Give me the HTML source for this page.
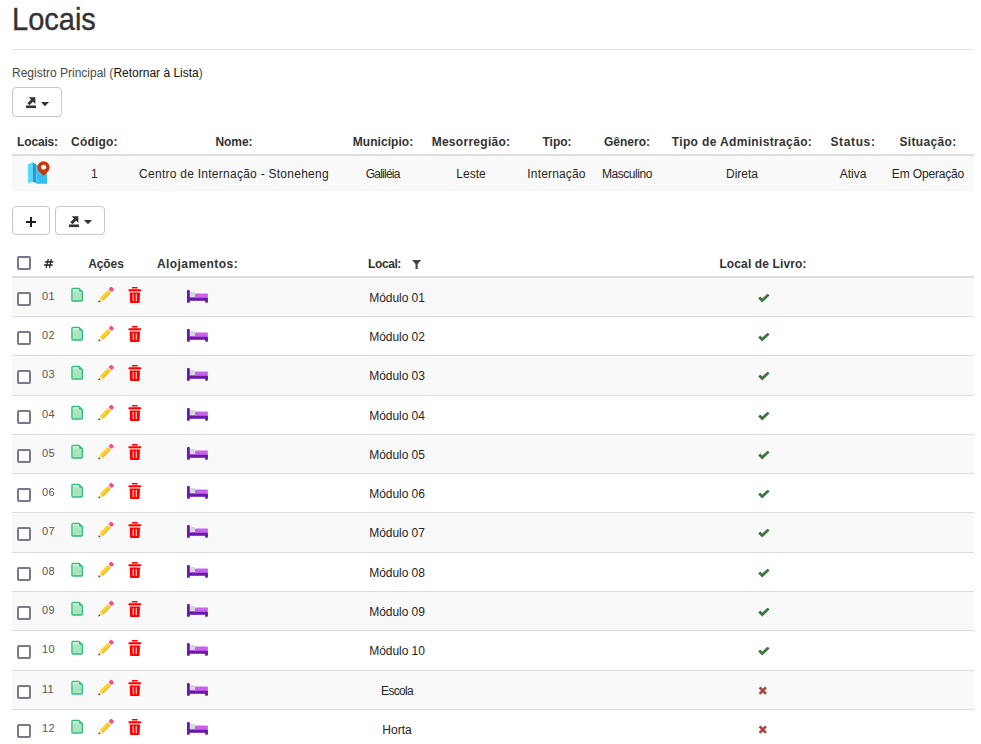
<!DOCTYPE html>
<html><head><meta charset="utf-8"><style>
html,body{margin:0;padding:0;background:#fff;width:981px;height:744px;overflow:hidden;position:relative}
</style></head><body>
<div style="position:absolute;left:0;top:0;transform-origin:0 30px;transform:scaleY(1.09);-webkit-text-stroke:0.35px #333"><div style="position:absolute;left:12px;top:3.75px;font:400 29px/33.35px 'Liberation Sans', sans-serif;color:#333;white-space:nowrap;letter-spacing:0px">Locais</div></div><div style="position:absolute;left:12px;top:49px;width:962px;height:1px;background:#e2e2e2"></div><div style="position:absolute;left:12px;top:66.54px;font:400 12px/13.80px 'Liberation Sans', sans-serif;color:#484848;white-space:nowrap;letter-spacing:0px">Registro Principal (<span style="color:#111">Retornar à Lista</span>)</div><div style="position:absolute;left:12px;top:87px;width:48px;height:28px;border:1px solid #c8c8c8;border-radius:4px;background:#fff"></div><svg style="position:absolute;left:26px;top:97px" width="11" height="12" viewBox="0 0 11 12">
<path d="M2.6 0.2 H9.4 V7 Z" fill="#333"/>
<path d="M6.6 3 L2.4 7.2" stroke="#333" stroke-width="3"/>
<rect x="0" y="8.5" width="10" height="2.6" fill="#333"/></svg><svg style="position:absolute;left:41px;top:102px" width="8" height="5" viewBox="0 0 8 5"><path d="M0 0 H8 L4 4.2 Z" fill="#333"/></svg><div style="position:absolute;left:12px;top:154px;width:962px;height:2px;background:#ddd"></div><div style="position:absolute;left:12px;top:156px;width:962px;height:35px;background:#f9f9f9"></div><div style="position:absolute;left:-162.5px;width:400px;text-align:center;top:135.94px;font:700 12px/13.80px 'Liberation Sans', sans-serif;color:#333;white-space:nowrap;letter-spacing:-0.17px">Locais:</div><div style="position:absolute;left:-105.6px;width:400px;text-align:center;top:135.94px;font:700 12px/13.80px 'Liberation Sans', sans-serif;color:#333;white-space:nowrap;letter-spacing:0.2px">Código:</div><div style="position:absolute;left:34px;width:400px;text-align:center;top:135.94px;font:700 12px/13.80px 'Liberation Sans', sans-serif;color:#333;white-space:nowrap;letter-spacing:-0.09px">Nome:</div><div style="position:absolute;left:183px;width:400px;text-align:center;top:135.94px;font:700 12px/13.80px 'Liberation Sans', sans-serif;color:#333;white-space:nowrap;letter-spacing:0.06px">Município:</div><div style="position:absolute;left:271px;width:400px;text-align:center;top:135.94px;font:700 12px/13.80px 'Liberation Sans', sans-serif;color:#333;white-space:nowrap;letter-spacing:0.28px">Mesorregião:</div><div style="position:absolute;left:357px;width:400px;text-align:center;top:135.94px;font:700 12px/13.80px 'Liberation Sans', sans-serif;color:#333;white-space:nowrap;letter-spacing:-0.03px">Tipo:</div><div style="position:absolute;left:427px;width:400px;text-align:center;top:135.94px;font:700 12px/13.80px 'Liberation Sans', sans-serif;color:#333;white-space:nowrap;letter-spacing:0.0px">Gênero:</div><div style="position:absolute;left:542px;width:400px;text-align:center;top:135.94px;font:700 12px/13.80px 'Liberation Sans', sans-serif;color:#333;white-space:nowrap;letter-spacing:0.35px">Tipo de Administração:</div><div style="position:absolute;left:653px;width:400px;text-align:center;top:135.94px;font:700 12px/13.80px 'Liberation Sans', sans-serif;color:#333;white-space:nowrap;letter-spacing:0.62px">Status:</div><div style="position:absolute;left:728px;width:400px;text-align:center;top:135.94px;font:700 12px/13.80px 'Liberation Sans', sans-serif;color:#333;white-space:nowrap;letter-spacing:0.34px">Situação:</div><div style="position:absolute;left:-105.6px;width:400px;text-align:center;top:168.14px;font:400 12px/13.80px 'Liberation Sans', sans-serif;color:#262626;white-space:nowrap;letter-spacing:0px">1</div><div style="position:absolute;left:34px;width:400px;text-align:center;top:168.14px;font:400 12px/13.80px 'Liberation Sans', sans-serif;color:#262626;white-space:nowrap;letter-spacing:0.26px">Centro de Internação - Stoneheng</div><div style="position:absolute;left:182.7px;width:400px;text-align:center;top:168.14px;font:400 12px/13.80px 'Liberation Sans', sans-serif;color:#262626;white-space:nowrap;letter-spacing:-0.76px">Galiléia</div><div style="position:absolute;left:271px;width:400px;text-align:center;top:168.14px;font:400 12px/13.80px 'Liberation Sans', sans-serif;color:#262626;white-space:nowrap;letter-spacing:0.01px">Leste</div><div style="position:absolute;left:356.5px;width:400px;text-align:center;top:168.14px;font:400 12px/13.80px 'Liberation Sans', sans-serif;color:#262626;white-space:nowrap;letter-spacing:0.16px">Internação</div><div style="position:absolute;left:427px;width:400px;text-align:center;top:168.14px;font:400 12px/13.80px 'Liberation Sans', sans-serif;color:#262626;white-space:nowrap;letter-spacing:-0.45px">Masculino</div><div style="position:absolute;left:542px;width:400px;text-align:center;top:168.14px;font:400 12px/13.80px 'Liberation Sans', sans-serif;color:#262626;white-space:nowrap;letter-spacing:0.0px">Direta</div><div style="position:absolute;left:653px;width:400px;text-align:center;top:168.14px;font:400 12px/13.80px 'Liberation Sans', sans-serif;color:#262626;white-space:nowrap;letter-spacing:-0.02px">Ativa</div><div style="position:absolute;left:728px;width:400px;text-align:center;top:168.14px;font:400 12px/13.80px 'Liberation Sans', sans-serif;color:#262626;white-space:nowrap;letter-spacing:-0.16px">Em Operação</div><svg style="position:absolute;left:28px;top:161px" width="23" height="24" viewBox="0 0 23 24">
<path d="M0 3.2 L4.7 1.6 V21 L0 22 Z" fill="#52dcfb"/>
<path d="M4.7 1.6 L8.3 3.4 V22 L4.7 21 Z" fill="#1a9de6"/>
<path d="M8.3 4 H19 V22.8 H8.3 Z" fill="#36c0f0"/>
<path d="M15.6 0.2 A6.1 6.1 0 0 1 21.7 6.3 C21.7 9.3 19.2 11.8 15.6 14.8 C12 11.8 9.5 9.3 9.5 6.3 A6.1 6.1 0 0 1 15.6 0.2 Z" fill="#c93a0a"/>
<circle cx="15.6" cy="6.3" r="2.45" fill="#fff"/></svg><div style="position:absolute;left:12px;top:206px;width:36px;height:27px;border:1px solid #c8c8c8;border-radius:4px;background:#fff"></div><div style="position:absolute;left:26.3px;top:221px;width:9.7px;height:2.2px;background:#1e1e1e"></div><div style="position:absolute;left:30px;top:217px;width:2.3px;height:9.8px;background:#1e1e1e"></div><div style="position:absolute;left:55px;top:206px;width:48px;height:27px;border:1px solid #c8c8c8;border-radius:4px;background:#fff"></div><svg style="position:absolute;left:69px;top:216px" width="11" height="12" viewBox="0 0 11 12">
<path d="M2.6 0.2 H9.4 V7 Z" fill="#333"/>
<path d="M6.6 3 L2.4 7.2" stroke="#333" stroke-width="3"/>
<rect x="0" y="8.5" width="10" height="2.6" fill="#333"/></svg><svg style="position:absolute;left:84px;top:220px" width="8" height="5" viewBox="0 0 8 5"><path d="M0 0 H8 L4 4.2 Z" fill="#333"/></svg><div style="position:absolute;left:17px;top:256px;width:10px;height:10px;border:2px solid #7b7889;border-radius:2px;background:#fff"></div><svg style="position:absolute;left:44px;top:258px" width="10" height="11" viewBox="0 0 10 11"><rect x="1.1" y="3.1" width="8.3" height="1.6" fill="#2a2a2a"/><rect x="0.1" y="6.2" width="8.5" height="1.6" fill="#2a2a2a"/><path d="M4.3 1 L2.1 10 M7.4 1 L5.4 10" stroke="#2a2a2a" stroke-width="1.2"/></svg><div style="position:absolute;left:-94px;width:400px;text-align:center;top:258.14px;font:700 12px/13.80px 'Liberation Sans', sans-serif;color:#333;white-space:nowrap;letter-spacing:-0.08px">Ações</div><div style="position:absolute;left:-2.5px;width:400px;text-align:center;top:258.14px;font:700 12px/13.80px 'Liberation Sans', sans-serif;color:#333;white-space:nowrap;letter-spacing:0.43px">Alojamentos:</div><div style="position:absolute;left:184.5px;width:400px;text-align:center;top:258.14px;font:700 12px/13.80px 'Liberation Sans', sans-serif;color:#333;white-space:nowrap;letter-spacing:-0.43px">Local:</div><svg style="position:absolute;left:412px;top:260px" width="10" height="9" viewBox="0 0 10 9"><path d="M0 0 H9.2 L5.7 4 V9 H3.5 V4 Z" fill="#444"/></svg><div style="position:absolute;left:563px;width:400px;text-align:center;top:258.14px;font:700 12px/13.80px 'Liberation Sans', sans-serif;color:#333;white-space:nowrap;letter-spacing:0.12px">Local de Livro:</div><div style="position:absolute;left:12px;top:276px;width:962px;height:2px;background:#ddd"></div><div style="position:absolute;left:12px;top:278px;width:962px;height:38px;background:#f9f9f9"></div><div style="position:absolute;left:12px;top:316px;width:962px;height:1px;background:#ddd"></div><div style="position:absolute;left:17px;top:292px;width:10px;height:10px;border:2px solid #7b7889;border-radius:2px;background:#fff"></div><div style="position:absolute;left:42px;top:290.05px;font:400 11px/12.65px 'Liberation Sans', sans-serif;color:#555;white-space:nowrap;letter-spacing:0.3px">01</div><svg style="position:absolute;left:71px;top:287px" width="13" height="16" viewBox="0 0 13 16">
<defs><linearGradient id="dg" x1="0" y1="0" x2="0" y2="1"><stop offset="0" stop-color="#d9f2e1"/><stop offset="0.35" stop-color="#a9e6c0"/><stop offset="1" stop-color="#a6e4bc"/></linearGradient></defs>
<path d="M1.9 1.4 H8 L11.4 4.8 V13 Q11.4 14 10.4 14 H1.9 Q0.9 14 0.9 13 V2.4 Q0.9 1.4 1.9 1.4 Z" fill="url(#dg)" stroke="#2fbf7f" stroke-width="1.3"/>
<path d="M8 1.4 V3.4 Q8 4.8 9.4 4.8 H11.4 Z" fill="#2fbf7f"/></svg><svg style="position:absolute;left:96px;top:285px" width="20" height="20" viewBox="0 0 20 20">
<g transform="translate(2.2 17.4) rotate(-45)">
<path d="M0 0 L4.6 -2.1 V2.1 Z" fill="#ffe2a0"/>
<path d="M0 0 L2.1 -1 V1 Z" fill="#2b2f3a"/>
<rect x="4.5" y="-2.15" width="11.2" height="4.3" fill="#ffd12c"/>
<rect x="4.5" y="0.95" width="11.2" height="1.2" fill="#f4ae22"/>
<rect x="15.7" y="-2.15" width="0.9" height="4.3" fill="#f2efe6"/>
<rect x="16.6" y="-2.2" width="3.9" height="4.4" rx="1.3" fill="#ff4885"/>
</g></svg><svg style="position:absolute;left:128px;top:287px" width="14" height="17" viewBox="0 0 14 17">
<rect x="3.8" y="0" width="6" height="1.6" rx="0.7" fill="#ff0000"/>
<rect x="4.6" y="1.4" width="4.6" height="1.2" fill="#ff8a8a"/>
<rect x="0.3" y="2.3" width="13" height="2" rx="1" fill="#ff0000"/>
<rect x="1.6" y="4.2" width="10.4" height="1.6" fill="#ff9090"/>
<path d="M1.7 5.8 H12 L11.6 15 Q11.5 16 10.5 16 H3.1 Q2.1 16 2 15 Z" fill="#ff0000"/>
<rect x="4.7" y="7.1" width="1.1" height="6.8" rx="0.5" fill="#ffe5e5"/>
<rect x="7.7" y="7.1" width="1.1" height="6.8" rx="0.5" fill="#ffe5e5"/></svg><svg style="position:absolute;left:187px;top:290px" width="22" height="14" viewBox="0 0 22 14">
<rect x="8" y="3.4" width="12.9" height="4.6" rx="0.8" fill="#c862ea"/>
<rect x="2.6" y="2" width="5.4" height="5" fill="#d6d8dc"/>
<rect x="2.6" y="7" width="5.4" height="1" fill="#c55fe8"/>
<rect x="0" y="0" width="2.8" height="12.8" rx="0.9" fill="#6a19a9"/>
<rect x="2" y="7.8" width="18.9" height="3" fill="#6a19a9"/>
<rect x="18.1" y="8" width="2.8" height="4.8" rx="0.7" fill="#6a19a9"/></svg><div style="position:absolute;left:197px;width:400px;text-align:center;top:292.14px;font:400 12px/13.80px 'Liberation Sans', sans-serif;color:#262626;white-space:nowrap;letter-spacing:-0.06px">Módulo 01</div><svg style="position:absolute;left:758px;top:294px" width="12" height="9" viewBox="0 0 12 9"><path d="M1.2 3.6 L4.2 6.6 L10.6 0.6" stroke="#3c763d" stroke-width="2.8" fill="none"/></svg><div style="position:absolute;left:12px;top:355px;width:962px;height:1px;background:#ddd"></div><div style="position:absolute;left:17px;top:331px;width:10px;height:10px;border:2px solid #7b7889;border-radius:2px;background:#fff"></div><div style="position:absolute;left:42px;top:329.05px;font:400 11px/12.65px 'Liberation Sans', sans-serif;color:#555;white-space:nowrap;letter-spacing:0.3px">02</div><svg style="position:absolute;left:71px;top:326px" width="13" height="16" viewBox="0 0 13 16">
<defs><linearGradient id="dg" x1="0" y1="0" x2="0" y2="1"><stop offset="0" stop-color="#d9f2e1"/><stop offset="0.35" stop-color="#a9e6c0"/><stop offset="1" stop-color="#a6e4bc"/></linearGradient></defs>
<path d="M1.9 1.4 H8 L11.4 4.8 V13 Q11.4 14 10.4 14 H1.9 Q0.9 14 0.9 13 V2.4 Q0.9 1.4 1.9 1.4 Z" fill="url(#dg)" stroke="#2fbf7f" stroke-width="1.3"/>
<path d="M8 1.4 V3.4 Q8 4.8 9.4 4.8 H11.4 Z" fill="#2fbf7f"/></svg><svg style="position:absolute;left:96px;top:324px" width="20" height="20" viewBox="0 0 20 20">
<g transform="translate(2.2 17.4) rotate(-45)">
<path d="M0 0 L4.6 -2.1 V2.1 Z" fill="#ffe2a0"/>
<path d="M0 0 L2.1 -1 V1 Z" fill="#2b2f3a"/>
<rect x="4.5" y="-2.15" width="11.2" height="4.3" fill="#ffd12c"/>
<rect x="4.5" y="0.95" width="11.2" height="1.2" fill="#f4ae22"/>
<rect x="15.7" y="-2.15" width="0.9" height="4.3" fill="#f2efe6"/>
<rect x="16.6" y="-2.2" width="3.9" height="4.4" rx="1.3" fill="#ff4885"/>
</g></svg><svg style="position:absolute;left:128px;top:326px" width="14" height="17" viewBox="0 0 14 17">
<rect x="3.8" y="0" width="6" height="1.6" rx="0.7" fill="#ff0000"/>
<rect x="4.6" y="1.4" width="4.6" height="1.2" fill="#ff8a8a"/>
<rect x="0.3" y="2.3" width="13" height="2" rx="1" fill="#ff0000"/>
<rect x="1.6" y="4.2" width="10.4" height="1.6" fill="#ff9090"/>
<path d="M1.7 5.8 H12 L11.6 15 Q11.5 16 10.5 16 H3.1 Q2.1 16 2 15 Z" fill="#ff0000"/>
<rect x="4.7" y="7.1" width="1.1" height="6.8" rx="0.5" fill="#ffe5e5"/>
<rect x="7.7" y="7.1" width="1.1" height="6.8" rx="0.5" fill="#ffe5e5"/></svg><svg style="position:absolute;left:187px;top:329px" width="22" height="14" viewBox="0 0 22 14">
<rect x="8" y="3.4" width="12.9" height="4.6" rx="0.8" fill="#c862ea"/>
<rect x="2.6" y="2" width="5.4" height="5" fill="#d6d8dc"/>
<rect x="2.6" y="7" width="5.4" height="1" fill="#c55fe8"/>
<rect x="0" y="0" width="2.8" height="12.8" rx="0.9" fill="#6a19a9"/>
<rect x="2" y="7.8" width="18.9" height="3" fill="#6a19a9"/>
<rect x="18.1" y="8" width="2.8" height="4.8" rx="0.7" fill="#6a19a9"/></svg><div style="position:absolute;left:197px;width:400px;text-align:center;top:331.14px;font:400 12px/13.80px 'Liberation Sans', sans-serif;color:#262626;white-space:nowrap;letter-spacing:-0.06px">Módulo 02</div><svg style="position:absolute;left:758px;top:333px" width="12" height="9" viewBox="0 0 12 9"><path d="M1.2 3.6 L4.2 6.6 L10.6 0.6" stroke="#3c763d" stroke-width="2.8" fill="none"/></svg><div style="position:absolute;left:12px;top:356px;width:962px;height:39px;background:#f9f9f9"></div><div style="position:absolute;left:12px;top:395px;width:962px;height:1px;background:#ddd"></div><div style="position:absolute;left:17px;top:370px;width:10px;height:10px;border:2px solid #7b7889;border-radius:2px;background:#fff"></div><div style="position:absolute;left:42px;top:368.05px;font:400 11px/12.65px 'Liberation Sans', sans-serif;color:#555;white-space:nowrap;letter-spacing:0.3px">03</div><svg style="position:absolute;left:71px;top:365px" width="13" height="16" viewBox="0 0 13 16">
<defs><linearGradient id="dg" x1="0" y1="0" x2="0" y2="1"><stop offset="0" stop-color="#d9f2e1"/><stop offset="0.35" stop-color="#a9e6c0"/><stop offset="1" stop-color="#a6e4bc"/></linearGradient></defs>
<path d="M1.9 1.4 H8 L11.4 4.8 V13 Q11.4 14 10.4 14 H1.9 Q0.9 14 0.9 13 V2.4 Q0.9 1.4 1.9 1.4 Z" fill="url(#dg)" stroke="#2fbf7f" stroke-width="1.3"/>
<path d="M8 1.4 V3.4 Q8 4.8 9.4 4.8 H11.4 Z" fill="#2fbf7f"/></svg><svg style="position:absolute;left:96px;top:363px" width="20" height="20" viewBox="0 0 20 20">
<g transform="translate(2.2 17.4) rotate(-45)">
<path d="M0 0 L4.6 -2.1 V2.1 Z" fill="#ffe2a0"/>
<path d="M0 0 L2.1 -1 V1 Z" fill="#2b2f3a"/>
<rect x="4.5" y="-2.15" width="11.2" height="4.3" fill="#ffd12c"/>
<rect x="4.5" y="0.95" width="11.2" height="1.2" fill="#f4ae22"/>
<rect x="15.7" y="-2.15" width="0.9" height="4.3" fill="#f2efe6"/>
<rect x="16.6" y="-2.2" width="3.9" height="4.4" rx="1.3" fill="#ff4885"/>
</g></svg><svg style="position:absolute;left:128px;top:365px" width="14" height="17" viewBox="0 0 14 17">
<rect x="3.8" y="0" width="6" height="1.6" rx="0.7" fill="#ff0000"/>
<rect x="4.6" y="1.4" width="4.6" height="1.2" fill="#ff8a8a"/>
<rect x="0.3" y="2.3" width="13" height="2" rx="1" fill="#ff0000"/>
<rect x="1.6" y="4.2" width="10.4" height="1.6" fill="#ff9090"/>
<path d="M1.7 5.8 H12 L11.6 15 Q11.5 16 10.5 16 H3.1 Q2.1 16 2 15 Z" fill="#ff0000"/>
<rect x="4.7" y="7.1" width="1.1" height="6.8" rx="0.5" fill="#ffe5e5"/>
<rect x="7.7" y="7.1" width="1.1" height="6.8" rx="0.5" fill="#ffe5e5"/></svg><svg style="position:absolute;left:187px;top:368px" width="22" height="14" viewBox="0 0 22 14">
<rect x="8" y="3.4" width="12.9" height="4.6" rx="0.8" fill="#c862ea"/>
<rect x="2.6" y="2" width="5.4" height="5" fill="#d6d8dc"/>
<rect x="2.6" y="7" width="5.4" height="1" fill="#c55fe8"/>
<rect x="0" y="0" width="2.8" height="12.8" rx="0.9" fill="#6a19a9"/>
<rect x="2" y="7.8" width="18.9" height="3" fill="#6a19a9"/>
<rect x="18.1" y="8" width="2.8" height="4.8" rx="0.7" fill="#6a19a9"/></svg><div style="position:absolute;left:197px;width:400px;text-align:center;top:370.14px;font:400 12px/13.80px 'Liberation Sans', sans-serif;color:#262626;white-space:nowrap;letter-spacing:-0.06px">Módulo 03</div><svg style="position:absolute;left:758px;top:372px" width="12" height="9" viewBox="0 0 12 9"><path d="M1.2 3.6 L4.2 6.6 L10.6 0.6" stroke="#3c763d" stroke-width="2.8" fill="none"/></svg><div style="position:absolute;left:12px;top:434px;width:962px;height:1px;background:#ddd"></div><div style="position:absolute;left:17px;top:410px;width:10px;height:10px;border:2px solid #7b7889;border-radius:2px;background:#fff"></div><div style="position:absolute;left:42px;top:408.05px;font:400 11px/12.65px 'Liberation Sans', sans-serif;color:#555;white-space:nowrap;letter-spacing:0.3px">04</div><svg style="position:absolute;left:71px;top:405px" width="13" height="16" viewBox="0 0 13 16">
<defs><linearGradient id="dg" x1="0" y1="0" x2="0" y2="1"><stop offset="0" stop-color="#d9f2e1"/><stop offset="0.35" stop-color="#a9e6c0"/><stop offset="1" stop-color="#a6e4bc"/></linearGradient></defs>
<path d="M1.9 1.4 H8 L11.4 4.8 V13 Q11.4 14 10.4 14 H1.9 Q0.9 14 0.9 13 V2.4 Q0.9 1.4 1.9 1.4 Z" fill="url(#dg)" stroke="#2fbf7f" stroke-width="1.3"/>
<path d="M8 1.4 V3.4 Q8 4.8 9.4 4.8 H11.4 Z" fill="#2fbf7f"/></svg><svg style="position:absolute;left:96px;top:403px" width="20" height="20" viewBox="0 0 20 20">
<g transform="translate(2.2 17.4) rotate(-45)">
<path d="M0 0 L4.6 -2.1 V2.1 Z" fill="#ffe2a0"/>
<path d="M0 0 L2.1 -1 V1 Z" fill="#2b2f3a"/>
<rect x="4.5" y="-2.15" width="11.2" height="4.3" fill="#ffd12c"/>
<rect x="4.5" y="0.95" width="11.2" height="1.2" fill="#f4ae22"/>
<rect x="15.7" y="-2.15" width="0.9" height="4.3" fill="#f2efe6"/>
<rect x="16.6" y="-2.2" width="3.9" height="4.4" rx="1.3" fill="#ff4885"/>
</g></svg><svg style="position:absolute;left:128px;top:405px" width="14" height="17" viewBox="0 0 14 17">
<rect x="3.8" y="0" width="6" height="1.6" rx="0.7" fill="#ff0000"/>
<rect x="4.6" y="1.4" width="4.6" height="1.2" fill="#ff8a8a"/>
<rect x="0.3" y="2.3" width="13" height="2" rx="1" fill="#ff0000"/>
<rect x="1.6" y="4.2" width="10.4" height="1.6" fill="#ff9090"/>
<path d="M1.7 5.8 H12 L11.6 15 Q11.5 16 10.5 16 H3.1 Q2.1 16 2 15 Z" fill="#ff0000"/>
<rect x="4.7" y="7.1" width="1.1" height="6.8" rx="0.5" fill="#ffe5e5"/>
<rect x="7.7" y="7.1" width="1.1" height="6.8" rx="0.5" fill="#ffe5e5"/></svg><svg style="position:absolute;left:187px;top:408px" width="22" height="14" viewBox="0 0 22 14">
<rect x="8" y="3.4" width="12.9" height="4.6" rx="0.8" fill="#c862ea"/>
<rect x="2.6" y="2" width="5.4" height="5" fill="#d6d8dc"/>
<rect x="2.6" y="7" width="5.4" height="1" fill="#c55fe8"/>
<rect x="0" y="0" width="2.8" height="12.8" rx="0.9" fill="#6a19a9"/>
<rect x="2" y="7.8" width="18.9" height="3" fill="#6a19a9"/>
<rect x="18.1" y="8" width="2.8" height="4.8" rx="0.7" fill="#6a19a9"/></svg><div style="position:absolute;left:197px;width:400px;text-align:center;top:410.14px;font:400 12px/13.80px 'Liberation Sans', sans-serif;color:#262626;white-space:nowrap;letter-spacing:-0.06px">Módulo 04</div><svg style="position:absolute;left:758px;top:412px" width="12" height="9" viewBox="0 0 12 9"><path d="M1.2 3.6 L4.2 6.6 L10.6 0.6" stroke="#3c763d" stroke-width="2.8" fill="none"/></svg><div style="position:absolute;left:12px;top:435px;width:962px;height:38px;background:#f9f9f9"></div><div style="position:absolute;left:12px;top:473px;width:962px;height:1px;background:#ddd"></div><div style="position:absolute;left:17px;top:449px;width:10px;height:10px;border:2px solid #7b7889;border-radius:2px;background:#fff"></div><div style="position:absolute;left:42px;top:447.05px;font:400 11px/12.65px 'Liberation Sans', sans-serif;color:#555;white-space:nowrap;letter-spacing:0.3px">05</div><svg style="position:absolute;left:71px;top:444px" width="13" height="16" viewBox="0 0 13 16">
<defs><linearGradient id="dg" x1="0" y1="0" x2="0" y2="1"><stop offset="0" stop-color="#d9f2e1"/><stop offset="0.35" stop-color="#a9e6c0"/><stop offset="1" stop-color="#a6e4bc"/></linearGradient></defs>
<path d="M1.9 1.4 H8 L11.4 4.8 V13 Q11.4 14 10.4 14 H1.9 Q0.9 14 0.9 13 V2.4 Q0.9 1.4 1.9 1.4 Z" fill="url(#dg)" stroke="#2fbf7f" stroke-width="1.3"/>
<path d="M8 1.4 V3.4 Q8 4.8 9.4 4.8 H11.4 Z" fill="#2fbf7f"/></svg><svg style="position:absolute;left:96px;top:442px" width="20" height="20" viewBox="0 0 20 20">
<g transform="translate(2.2 17.4) rotate(-45)">
<path d="M0 0 L4.6 -2.1 V2.1 Z" fill="#ffe2a0"/>
<path d="M0 0 L2.1 -1 V1 Z" fill="#2b2f3a"/>
<rect x="4.5" y="-2.15" width="11.2" height="4.3" fill="#ffd12c"/>
<rect x="4.5" y="0.95" width="11.2" height="1.2" fill="#f4ae22"/>
<rect x="15.7" y="-2.15" width="0.9" height="4.3" fill="#f2efe6"/>
<rect x="16.6" y="-2.2" width="3.9" height="4.4" rx="1.3" fill="#ff4885"/>
</g></svg><svg style="position:absolute;left:128px;top:444px" width="14" height="17" viewBox="0 0 14 17">
<rect x="3.8" y="0" width="6" height="1.6" rx="0.7" fill="#ff0000"/>
<rect x="4.6" y="1.4" width="4.6" height="1.2" fill="#ff8a8a"/>
<rect x="0.3" y="2.3" width="13" height="2" rx="1" fill="#ff0000"/>
<rect x="1.6" y="4.2" width="10.4" height="1.6" fill="#ff9090"/>
<path d="M1.7 5.8 H12 L11.6 15 Q11.5 16 10.5 16 H3.1 Q2.1 16 2 15 Z" fill="#ff0000"/>
<rect x="4.7" y="7.1" width="1.1" height="6.8" rx="0.5" fill="#ffe5e5"/>
<rect x="7.7" y="7.1" width="1.1" height="6.8" rx="0.5" fill="#ffe5e5"/></svg><svg style="position:absolute;left:187px;top:447px" width="22" height="14" viewBox="0 0 22 14">
<rect x="8" y="3.4" width="12.9" height="4.6" rx="0.8" fill="#c862ea"/>
<rect x="2.6" y="2" width="5.4" height="5" fill="#d6d8dc"/>
<rect x="2.6" y="7" width="5.4" height="1" fill="#c55fe8"/>
<rect x="0" y="0" width="2.8" height="12.8" rx="0.9" fill="#6a19a9"/>
<rect x="2" y="7.8" width="18.9" height="3" fill="#6a19a9"/>
<rect x="18.1" y="8" width="2.8" height="4.8" rx="0.7" fill="#6a19a9"/></svg><div style="position:absolute;left:197px;width:400px;text-align:center;top:449.14px;font:400 12px/13.80px 'Liberation Sans', sans-serif;color:#262626;white-space:nowrap;letter-spacing:-0.06px">Módulo 05</div><svg style="position:absolute;left:758px;top:451px" width="12" height="9" viewBox="0 0 12 9"><path d="M1.2 3.6 L4.2 6.6 L10.6 0.6" stroke="#3c763d" stroke-width="2.8" fill="none"/></svg><div style="position:absolute;left:12px;top:512px;width:962px;height:1px;background:#ddd"></div><div style="position:absolute;left:17px;top:488px;width:10px;height:10px;border:2px solid #7b7889;border-radius:2px;background:#fff"></div><div style="position:absolute;left:42px;top:486.05px;font:400 11px/12.65px 'Liberation Sans', sans-serif;color:#555;white-space:nowrap;letter-spacing:0.3px">06</div><svg style="position:absolute;left:71px;top:483px" width="13" height="16" viewBox="0 0 13 16">
<defs><linearGradient id="dg" x1="0" y1="0" x2="0" y2="1"><stop offset="0" stop-color="#d9f2e1"/><stop offset="0.35" stop-color="#a9e6c0"/><stop offset="1" stop-color="#a6e4bc"/></linearGradient></defs>
<path d="M1.9 1.4 H8 L11.4 4.8 V13 Q11.4 14 10.4 14 H1.9 Q0.9 14 0.9 13 V2.4 Q0.9 1.4 1.9 1.4 Z" fill="url(#dg)" stroke="#2fbf7f" stroke-width="1.3"/>
<path d="M8 1.4 V3.4 Q8 4.8 9.4 4.8 H11.4 Z" fill="#2fbf7f"/></svg><svg style="position:absolute;left:96px;top:481px" width="20" height="20" viewBox="0 0 20 20">
<g transform="translate(2.2 17.4) rotate(-45)">
<path d="M0 0 L4.6 -2.1 V2.1 Z" fill="#ffe2a0"/>
<path d="M0 0 L2.1 -1 V1 Z" fill="#2b2f3a"/>
<rect x="4.5" y="-2.15" width="11.2" height="4.3" fill="#ffd12c"/>
<rect x="4.5" y="0.95" width="11.2" height="1.2" fill="#f4ae22"/>
<rect x="15.7" y="-2.15" width="0.9" height="4.3" fill="#f2efe6"/>
<rect x="16.6" y="-2.2" width="3.9" height="4.4" rx="1.3" fill="#ff4885"/>
</g></svg><svg style="position:absolute;left:128px;top:483px" width="14" height="17" viewBox="0 0 14 17">
<rect x="3.8" y="0" width="6" height="1.6" rx="0.7" fill="#ff0000"/>
<rect x="4.6" y="1.4" width="4.6" height="1.2" fill="#ff8a8a"/>
<rect x="0.3" y="2.3" width="13" height="2" rx="1" fill="#ff0000"/>
<rect x="1.6" y="4.2" width="10.4" height="1.6" fill="#ff9090"/>
<path d="M1.7 5.8 H12 L11.6 15 Q11.5 16 10.5 16 H3.1 Q2.1 16 2 15 Z" fill="#ff0000"/>
<rect x="4.7" y="7.1" width="1.1" height="6.8" rx="0.5" fill="#ffe5e5"/>
<rect x="7.7" y="7.1" width="1.1" height="6.8" rx="0.5" fill="#ffe5e5"/></svg><svg style="position:absolute;left:187px;top:486px" width="22" height="14" viewBox="0 0 22 14">
<rect x="8" y="3.4" width="12.9" height="4.6" rx="0.8" fill="#c862ea"/>
<rect x="2.6" y="2" width="5.4" height="5" fill="#d6d8dc"/>
<rect x="2.6" y="7" width="5.4" height="1" fill="#c55fe8"/>
<rect x="0" y="0" width="2.8" height="12.8" rx="0.9" fill="#6a19a9"/>
<rect x="2" y="7.8" width="18.9" height="3" fill="#6a19a9"/>
<rect x="18.1" y="8" width="2.8" height="4.8" rx="0.7" fill="#6a19a9"/></svg><div style="position:absolute;left:197px;width:400px;text-align:center;top:488.14px;font:400 12px/13.80px 'Liberation Sans', sans-serif;color:#262626;white-space:nowrap;letter-spacing:-0.06px">Módulo 06</div><svg style="position:absolute;left:758px;top:490px" width="12" height="9" viewBox="0 0 12 9"><path d="M1.2 3.6 L4.2 6.6 L10.6 0.6" stroke="#3c763d" stroke-width="2.8" fill="none"/></svg><div style="position:absolute;left:12px;top:513px;width:962px;height:39px;background:#f9f9f9"></div><div style="position:absolute;left:12px;top:552px;width:962px;height:1px;background:#ddd"></div><div style="position:absolute;left:17px;top:527px;width:10px;height:10px;border:2px solid #7b7889;border-radius:2px;background:#fff"></div><div style="position:absolute;left:42px;top:525.04px;font:400 11px/12.65px 'Liberation Sans', sans-serif;color:#555;white-space:nowrap;letter-spacing:0.3px">07</div><svg style="position:absolute;left:71px;top:522px" width="13" height="16" viewBox="0 0 13 16">
<defs><linearGradient id="dg" x1="0" y1="0" x2="0" y2="1"><stop offset="0" stop-color="#d9f2e1"/><stop offset="0.35" stop-color="#a9e6c0"/><stop offset="1" stop-color="#a6e4bc"/></linearGradient></defs>
<path d="M1.9 1.4 H8 L11.4 4.8 V13 Q11.4 14 10.4 14 H1.9 Q0.9 14 0.9 13 V2.4 Q0.9 1.4 1.9 1.4 Z" fill="url(#dg)" stroke="#2fbf7f" stroke-width="1.3"/>
<path d="M8 1.4 V3.4 Q8 4.8 9.4 4.8 H11.4 Z" fill="#2fbf7f"/></svg><svg style="position:absolute;left:96px;top:520px" width="20" height="20" viewBox="0 0 20 20">
<g transform="translate(2.2 17.4) rotate(-45)">
<path d="M0 0 L4.6 -2.1 V2.1 Z" fill="#ffe2a0"/>
<path d="M0 0 L2.1 -1 V1 Z" fill="#2b2f3a"/>
<rect x="4.5" y="-2.15" width="11.2" height="4.3" fill="#ffd12c"/>
<rect x="4.5" y="0.95" width="11.2" height="1.2" fill="#f4ae22"/>
<rect x="15.7" y="-2.15" width="0.9" height="4.3" fill="#f2efe6"/>
<rect x="16.6" y="-2.2" width="3.9" height="4.4" rx="1.3" fill="#ff4885"/>
</g></svg><svg style="position:absolute;left:128px;top:522px" width="14" height="17" viewBox="0 0 14 17">
<rect x="3.8" y="0" width="6" height="1.6" rx="0.7" fill="#ff0000"/>
<rect x="4.6" y="1.4" width="4.6" height="1.2" fill="#ff8a8a"/>
<rect x="0.3" y="2.3" width="13" height="2" rx="1" fill="#ff0000"/>
<rect x="1.6" y="4.2" width="10.4" height="1.6" fill="#ff9090"/>
<path d="M1.7 5.8 H12 L11.6 15 Q11.5 16 10.5 16 H3.1 Q2.1 16 2 15 Z" fill="#ff0000"/>
<rect x="4.7" y="7.1" width="1.1" height="6.8" rx="0.5" fill="#ffe5e5"/>
<rect x="7.7" y="7.1" width="1.1" height="6.8" rx="0.5" fill="#ffe5e5"/></svg><svg style="position:absolute;left:187px;top:525px" width="22" height="14" viewBox="0 0 22 14">
<rect x="8" y="3.4" width="12.9" height="4.6" rx="0.8" fill="#c862ea"/>
<rect x="2.6" y="2" width="5.4" height="5" fill="#d6d8dc"/>
<rect x="2.6" y="7" width="5.4" height="1" fill="#c55fe8"/>
<rect x="0" y="0" width="2.8" height="12.8" rx="0.9" fill="#6a19a9"/>
<rect x="2" y="7.8" width="18.9" height="3" fill="#6a19a9"/>
<rect x="18.1" y="8" width="2.8" height="4.8" rx="0.7" fill="#6a19a9"/></svg><div style="position:absolute;left:197px;width:400px;text-align:center;top:527.14px;font:400 12px/13.80px 'Liberation Sans', sans-serif;color:#262626;white-space:nowrap;letter-spacing:-0.06px">Módulo 07</div><svg style="position:absolute;left:758px;top:529px" width="12" height="9" viewBox="0 0 12 9"><path d="M1.2 3.6 L4.2 6.6 L10.6 0.6" stroke="#3c763d" stroke-width="2.8" fill="none"/></svg><div style="position:absolute;left:12px;top:591px;width:962px;height:1px;background:#ddd"></div><div style="position:absolute;left:17px;top:567px;width:10px;height:10px;border:2px solid #7b7889;border-radius:2px;background:#fff"></div><div style="position:absolute;left:42px;top:565.04px;font:400 11px/12.65px 'Liberation Sans', sans-serif;color:#555;white-space:nowrap;letter-spacing:0.3px">08</div><svg style="position:absolute;left:71px;top:562px" width="13" height="16" viewBox="0 0 13 16">
<defs><linearGradient id="dg" x1="0" y1="0" x2="0" y2="1"><stop offset="0" stop-color="#d9f2e1"/><stop offset="0.35" stop-color="#a9e6c0"/><stop offset="1" stop-color="#a6e4bc"/></linearGradient></defs>
<path d="M1.9 1.4 H8 L11.4 4.8 V13 Q11.4 14 10.4 14 H1.9 Q0.9 14 0.9 13 V2.4 Q0.9 1.4 1.9 1.4 Z" fill="url(#dg)" stroke="#2fbf7f" stroke-width="1.3"/>
<path d="M8 1.4 V3.4 Q8 4.8 9.4 4.8 H11.4 Z" fill="#2fbf7f"/></svg><svg style="position:absolute;left:96px;top:560px" width="20" height="20" viewBox="0 0 20 20">
<g transform="translate(2.2 17.4) rotate(-45)">
<path d="M0 0 L4.6 -2.1 V2.1 Z" fill="#ffe2a0"/>
<path d="M0 0 L2.1 -1 V1 Z" fill="#2b2f3a"/>
<rect x="4.5" y="-2.15" width="11.2" height="4.3" fill="#ffd12c"/>
<rect x="4.5" y="0.95" width="11.2" height="1.2" fill="#f4ae22"/>
<rect x="15.7" y="-2.15" width="0.9" height="4.3" fill="#f2efe6"/>
<rect x="16.6" y="-2.2" width="3.9" height="4.4" rx="1.3" fill="#ff4885"/>
</g></svg><svg style="position:absolute;left:128px;top:562px" width="14" height="17" viewBox="0 0 14 17">
<rect x="3.8" y="0" width="6" height="1.6" rx="0.7" fill="#ff0000"/>
<rect x="4.6" y="1.4" width="4.6" height="1.2" fill="#ff8a8a"/>
<rect x="0.3" y="2.3" width="13" height="2" rx="1" fill="#ff0000"/>
<rect x="1.6" y="4.2" width="10.4" height="1.6" fill="#ff9090"/>
<path d="M1.7 5.8 H12 L11.6 15 Q11.5 16 10.5 16 H3.1 Q2.1 16 2 15 Z" fill="#ff0000"/>
<rect x="4.7" y="7.1" width="1.1" height="6.8" rx="0.5" fill="#ffe5e5"/>
<rect x="7.7" y="7.1" width="1.1" height="6.8" rx="0.5" fill="#ffe5e5"/></svg><svg style="position:absolute;left:187px;top:565px" width="22" height="14" viewBox="0 0 22 14">
<rect x="8" y="3.4" width="12.9" height="4.6" rx="0.8" fill="#c862ea"/>
<rect x="2.6" y="2" width="5.4" height="5" fill="#d6d8dc"/>
<rect x="2.6" y="7" width="5.4" height="1" fill="#c55fe8"/>
<rect x="0" y="0" width="2.8" height="12.8" rx="0.9" fill="#6a19a9"/>
<rect x="2" y="7.8" width="18.9" height="3" fill="#6a19a9"/>
<rect x="18.1" y="8" width="2.8" height="4.8" rx="0.7" fill="#6a19a9"/></svg><div style="position:absolute;left:197px;width:400px;text-align:center;top:567.14px;font:400 12px/13.80px 'Liberation Sans', sans-serif;color:#262626;white-space:nowrap;letter-spacing:-0.06px">Módulo 08</div><svg style="position:absolute;left:758px;top:569px" width="12" height="9" viewBox="0 0 12 9"><path d="M1.2 3.6 L4.2 6.6 L10.6 0.6" stroke="#3c763d" stroke-width="2.8" fill="none"/></svg><div style="position:absolute;left:12px;top:592px;width:962px;height:38px;background:#f9f9f9"></div><div style="position:absolute;left:12px;top:630px;width:962px;height:1px;background:#ddd"></div><div style="position:absolute;left:17px;top:606px;width:10px;height:10px;border:2px solid #7b7889;border-radius:2px;background:#fff"></div><div style="position:absolute;left:42px;top:604.04px;font:400 11px/12.65px 'Liberation Sans', sans-serif;color:#555;white-space:nowrap;letter-spacing:0.3px">09</div><svg style="position:absolute;left:71px;top:601px" width="13" height="16" viewBox="0 0 13 16">
<defs><linearGradient id="dg" x1="0" y1="0" x2="0" y2="1"><stop offset="0" stop-color="#d9f2e1"/><stop offset="0.35" stop-color="#a9e6c0"/><stop offset="1" stop-color="#a6e4bc"/></linearGradient></defs>
<path d="M1.9 1.4 H8 L11.4 4.8 V13 Q11.4 14 10.4 14 H1.9 Q0.9 14 0.9 13 V2.4 Q0.9 1.4 1.9 1.4 Z" fill="url(#dg)" stroke="#2fbf7f" stroke-width="1.3"/>
<path d="M8 1.4 V3.4 Q8 4.8 9.4 4.8 H11.4 Z" fill="#2fbf7f"/></svg><svg style="position:absolute;left:96px;top:599px" width="20" height="20" viewBox="0 0 20 20">
<g transform="translate(2.2 17.4) rotate(-45)">
<path d="M0 0 L4.6 -2.1 V2.1 Z" fill="#ffe2a0"/>
<path d="M0 0 L2.1 -1 V1 Z" fill="#2b2f3a"/>
<rect x="4.5" y="-2.15" width="11.2" height="4.3" fill="#ffd12c"/>
<rect x="4.5" y="0.95" width="11.2" height="1.2" fill="#f4ae22"/>
<rect x="15.7" y="-2.15" width="0.9" height="4.3" fill="#f2efe6"/>
<rect x="16.6" y="-2.2" width="3.9" height="4.4" rx="1.3" fill="#ff4885"/>
</g></svg><svg style="position:absolute;left:128px;top:601px" width="14" height="17" viewBox="0 0 14 17">
<rect x="3.8" y="0" width="6" height="1.6" rx="0.7" fill="#ff0000"/>
<rect x="4.6" y="1.4" width="4.6" height="1.2" fill="#ff8a8a"/>
<rect x="0.3" y="2.3" width="13" height="2" rx="1" fill="#ff0000"/>
<rect x="1.6" y="4.2" width="10.4" height="1.6" fill="#ff9090"/>
<path d="M1.7 5.8 H12 L11.6 15 Q11.5 16 10.5 16 H3.1 Q2.1 16 2 15 Z" fill="#ff0000"/>
<rect x="4.7" y="7.1" width="1.1" height="6.8" rx="0.5" fill="#ffe5e5"/>
<rect x="7.7" y="7.1" width="1.1" height="6.8" rx="0.5" fill="#ffe5e5"/></svg><svg style="position:absolute;left:187px;top:604px" width="22" height="14" viewBox="0 0 22 14">
<rect x="8" y="3.4" width="12.9" height="4.6" rx="0.8" fill="#c862ea"/>
<rect x="2.6" y="2" width="5.4" height="5" fill="#d6d8dc"/>
<rect x="2.6" y="7" width="5.4" height="1" fill="#c55fe8"/>
<rect x="0" y="0" width="2.8" height="12.8" rx="0.9" fill="#6a19a9"/>
<rect x="2" y="7.8" width="18.9" height="3" fill="#6a19a9"/>
<rect x="18.1" y="8" width="2.8" height="4.8" rx="0.7" fill="#6a19a9"/></svg><div style="position:absolute;left:197px;width:400px;text-align:center;top:606.14px;font:400 12px/13.80px 'Liberation Sans', sans-serif;color:#262626;white-space:nowrap;letter-spacing:-0.06px">Módulo 09</div><svg style="position:absolute;left:758px;top:608px" width="12" height="9" viewBox="0 0 12 9"><path d="M1.2 3.6 L4.2 6.6 L10.6 0.6" stroke="#3c763d" stroke-width="2.8" fill="none"/></svg><div style="position:absolute;left:12px;top:670px;width:962px;height:1px;background:#ddd"></div><div style="position:absolute;left:17px;top:645px;width:10px;height:10px;border:2px solid #7b7889;border-radius:2px;background:#fff"></div><div style="position:absolute;left:42px;top:643.04px;font:400 11px/12.65px 'Liberation Sans', sans-serif;color:#555;white-space:nowrap;letter-spacing:0.3px">10</div><svg style="position:absolute;left:71px;top:640px" width="13" height="16" viewBox="0 0 13 16">
<defs><linearGradient id="dg" x1="0" y1="0" x2="0" y2="1"><stop offset="0" stop-color="#d9f2e1"/><stop offset="0.35" stop-color="#a9e6c0"/><stop offset="1" stop-color="#a6e4bc"/></linearGradient></defs>
<path d="M1.9 1.4 H8 L11.4 4.8 V13 Q11.4 14 10.4 14 H1.9 Q0.9 14 0.9 13 V2.4 Q0.9 1.4 1.9 1.4 Z" fill="url(#dg)" stroke="#2fbf7f" stroke-width="1.3"/>
<path d="M8 1.4 V3.4 Q8 4.8 9.4 4.8 H11.4 Z" fill="#2fbf7f"/></svg><svg style="position:absolute;left:96px;top:638px" width="20" height="20" viewBox="0 0 20 20">
<g transform="translate(2.2 17.4) rotate(-45)">
<path d="M0 0 L4.6 -2.1 V2.1 Z" fill="#ffe2a0"/>
<path d="M0 0 L2.1 -1 V1 Z" fill="#2b2f3a"/>
<rect x="4.5" y="-2.15" width="11.2" height="4.3" fill="#ffd12c"/>
<rect x="4.5" y="0.95" width="11.2" height="1.2" fill="#f4ae22"/>
<rect x="15.7" y="-2.15" width="0.9" height="4.3" fill="#f2efe6"/>
<rect x="16.6" y="-2.2" width="3.9" height="4.4" rx="1.3" fill="#ff4885"/>
</g></svg><svg style="position:absolute;left:128px;top:640px" width="14" height="17" viewBox="0 0 14 17">
<rect x="3.8" y="0" width="6" height="1.6" rx="0.7" fill="#ff0000"/>
<rect x="4.6" y="1.4" width="4.6" height="1.2" fill="#ff8a8a"/>
<rect x="0.3" y="2.3" width="13" height="2" rx="1" fill="#ff0000"/>
<rect x="1.6" y="4.2" width="10.4" height="1.6" fill="#ff9090"/>
<path d="M1.7 5.8 H12 L11.6 15 Q11.5 16 10.5 16 H3.1 Q2.1 16 2 15 Z" fill="#ff0000"/>
<rect x="4.7" y="7.1" width="1.1" height="6.8" rx="0.5" fill="#ffe5e5"/>
<rect x="7.7" y="7.1" width="1.1" height="6.8" rx="0.5" fill="#ffe5e5"/></svg><svg style="position:absolute;left:187px;top:643px" width="22" height="14" viewBox="0 0 22 14">
<rect x="8" y="3.4" width="12.9" height="4.6" rx="0.8" fill="#c862ea"/>
<rect x="2.6" y="2" width="5.4" height="5" fill="#d6d8dc"/>
<rect x="2.6" y="7" width="5.4" height="1" fill="#c55fe8"/>
<rect x="0" y="0" width="2.8" height="12.8" rx="0.9" fill="#6a19a9"/>
<rect x="2" y="7.8" width="18.9" height="3" fill="#6a19a9"/>
<rect x="18.1" y="8" width="2.8" height="4.8" rx="0.7" fill="#6a19a9"/></svg><div style="position:absolute;left:197px;width:400px;text-align:center;top:645.14px;font:400 12px/13.80px 'Liberation Sans', sans-serif;color:#262626;white-space:nowrap;letter-spacing:-0.06px">Módulo 10</div><svg style="position:absolute;left:758px;top:647px" width="12" height="9" viewBox="0 0 12 9"><path d="M1.2 3.6 L4.2 6.6 L10.6 0.6" stroke="#3c763d" stroke-width="2.8" fill="none"/></svg><div style="position:absolute;left:12px;top:671px;width:962px;height:38px;background:#f9f9f9"></div><div style="position:absolute;left:12px;top:709px;width:962px;height:1px;background:#ddd"></div><div style="position:absolute;left:17px;top:685px;width:10px;height:10px;border:2px solid #7b7889;border-radius:2px;background:#fff"></div><div style="position:absolute;left:42px;top:683.04px;font:400 11px/12.65px 'Liberation Sans', sans-serif;color:#555;white-space:nowrap;letter-spacing:0.3px">11</div><svg style="position:absolute;left:71px;top:680px" width="13" height="16" viewBox="0 0 13 16">
<defs><linearGradient id="dg" x1="0" y1="0" x2="0" y2="1"><stop offset="0" stop-color="#d9f2e1"/><stop offset="0.35" stop-color="#a9e6c0"/><stop offset="1" stop-color="#a6e4bc"/></linearGradient></defs>
<path d="M1.9 1.4 H8 L11.4 4.8 V13 Q11.4 14 10.4 14 H1.9 Q0.9 14 0.9 13 V2.4 Q0.9 1.4 1.9 1.4 Z" fill="url(#dg)" stroke="#2fbf7f" stroke-width="1.3"/>
<path d="M8 1.4 V3.4 Q8 4.8 9.4 4.8 H11.4 Z" fill="#2fbf7f"/></svg><svg style="position:absolute;left:96px;top:678px" width="20" height="20" viewBox="0 0 20 20">
<g transform="translate(2.2 17.4) rotate(-45)">
<path d="M0 0 L4.6 -2.1 V2.1 Z" fill="#ffe2a0"/>
<path d="M0 0 L2.1 -1 V1 Z" fill="#2b2f3a"/>
<rect x="4.5" y="-2.15" width="11.2" height="4.3" fill="#ffd12c"/>
<rect x="4.5" y="0.95" width="11.2" height="1.2" fill="#f4ae22"/>
<rect x="15.7" y="-2.15" width="0.9" height="4.3" fill="#f2efe6"/>
<rect x="16.6" y="-2.2" width="3.9" height="4.4" rx="1.3" fill="#ff4885"/>
</g></svg><svg style="position:absolute;left:128px;top:680px" width="14" height="17" viewBox="0 0 14 17">
<rect x="3.8" y="0" width="6" height="1.6" rx="0.7" fill="#ff0000"/>
<rect x="4.6" y="1.4" width="4.6" height="1.2" fill="#ff8a8a"/>
<rect x="0.3" y="2.3" width="13" height="2" rx="1" fill="#ff0000"/>
<rect x="1.6" y="4.2" width="10.4" height="1.6" fill="#ff9090"/>
<path d="M1.7 5.8 H12 L11.6 15 Q11.5 16 10.5 16 H3.1 Q2.1 16 2 15 Z" fill="#ff0000"/>
<rect x="4.7" y="7.1" width="1.1" height="6.8" rx="0.5" fill="#ffe5e5"/>
<rect x="7.7" y="7.1" width="1.1" height="6.8" rx="0.5" fill="#ffe5e5"/></svg><svg style="position:absolute;left:187px;top:683px" width="22" height="14" viewBox="0 0 22 14">
<rect x="8" y="3.4" width="12.9" height="4.6" rx="0.8" fill="#c862ea"/>
<rect x="2.6" y="2" width="5.4" height="5" fill="#d6d8dc"/>
<rect x="2.6" y="7" width="5.4" height="1" fill="#c55fe8"/>
<rect x="0" y="0" width="2.8" height="12.8" rx="0.9" fill="#6a19a9"/>
<rect x="2" y="7.8" width="18.9" height="3" fill="#6a19a9"/>
<rect x="18.1" y="8" width="2.8" height="4.8" rx="0.7" fill="#6a19a9"/></svg><div style="position:absolute;left:197px;width:400px;text-align:center;top:685.14px;font:400 12px/13.80px 'Liberation Sans', sans-serif;color:#262626;white-space:nowrap;letter-spacing:-0.7px">Escola</div><svg style="position:absolute;left:758px;top:686px" width="10" height="10" viewBox="0 0 10 10"><path d="M1.6 1.4 L8 7.8 M8 1.4 L1.6 7.8" stroke="#a94442" stroke-width="2.6" fill="none"/></svg><div style="position:absolute;left:17px;top:724px;width:10px;height:10px;border:2px solid #7b7889;border-radius:2px;background:#fff"></div><div style="position:absolute;left:42px;top:722.04px;font:400 11px/12.65px 'Liberation Sans', sans-serif;color:#555;white-space:nowrap;letter-spacing:0.3px">12</div><svg style="position:absolute;left:71px;top:719px" width="13" height="16" viewBox="0 0 13 16">
<defs><linearGradient id="dg" x1="0" y1="0" x2="0" y2="1"><stop offset="0" stop-color="#d9f2e1"/><stop offset="0.35" stop-color="#a9e6c0"/><stop offset="1" stop-color="#a6e4bc"/></linearGradient></defs>
<path d="M1.9 1.4 H8 L11.4 4.8 V13 Q11.4 14 10.4 14 H1.9 Q0.9 14 0.9 13 V2.4 Q0.9 1.4 1.9 1.4 Z" fill="url(#dg)" stroke="#2fbf7f" stroke-width="1.3"/>
<path d="M8 1.4 V3.4 Q8 4.8 9.4 4.8 H11.4 Z" fill="#2fbf7f"/></svg><svg style="position:absolute;left:96px;top:717px" width="20" height="20" viewBox="0 0 20 20">
<g transform="translate(2.2 17.4) rotate(-45)">
<path d="M0 0 L4.6 -2.1 V2.1 Z" fill="#ffe2a0"/>
<path d="M0 0 L2.1 -1 V1 Z" fill="#2b2f3a"/>
<rect x="4.5" y="-2.15" width="11.2" height="4.3" fill="#ffd12c"/>
<rect x="4.5" y="0.95" width="11.2" height="1.2" fill="#f4ae22"/>
<rect x="15.7" y="-2.15" width="0.9" height="4.3" fill="#f2efe6"/>
<rect x="16.6" y="-2.2" width="3.9" height="4.4" rx="1.3" fill="#ff4885"/>
</g></svg><svg style="position:absolute;left:128px;top:719px" width="14" height="17" viewBox="0 0 14 17">
<rect x="3.8" y="0" width="6" height="1.6" rx="0.7" fill="#ff0000"/>
<rect x="4.6" y="1.4" width="4.6" height="1.2" fill="#ff8a8a"/>
<rect x="0.3" y="2.3" width="13" height="2" rx="1" fill="#ff0000"/>
<rect x="1.6" y="4.2" width="10.4" height="1.6" fill="#ff9090"/>
<path d="M1.7 5.8 H12 L11.6 15 Q11.5 16 10.5 16 H3.1 Q2.1 16 2 15 Z" fill="#ff0000"/>
<rect x="4.7" y="7.1" width="1.1" height="6.8" rx="0.5" fill="#ffe5e5"/>
<rect x="7.7" y="7.1" width="1.1" height="6.8" rx="0.5" fill="#ffe5e5"/></svg><svg style="position:absolute;left:187px;top:722px" width="22" height="14" viewBox="0 0 22 14">
<rect x="8" y="3.4" width="12.9" height="4.6" rx="0.8" fill="#c862ea"/>
<rect x="2.6" y="2" width="5.4" height="5" fill="#d6d8dc"/>
<rect x="2.6" y="7" width="5.4" height="1" fill="#c55fe8"/>
<rect x="0" y="0" width="2.8" height="12.8" rx="0.9" fill="#6a19a9"/>
<rect x="2" y="7.8" width="18.9" height="3" fill="#6a19a9"/>
<rect x="18.1" y="8" width="2.8" height="4.8" rx="0.7" fill="#6a19a9"/></svg><div style="position:absolute;left:197px;width:400px;text-align:center;top:724.14px;font:400 12px/13.80px 'Liberation Sans', sans-serif;color:#262626;white-space:nowrap;letter-spacing:0.0px">Horta</div><svg style="position:absolute;left:758px;top:725px" width="10" height="10" viewBox="0 0 10 10"><path d="M1.6 1.4 L8 7.8 M8 1.4 L1.6 7.8" stroke="#a94442" stroke-width="2.6" fill="none"/></svg>
</body></html>
